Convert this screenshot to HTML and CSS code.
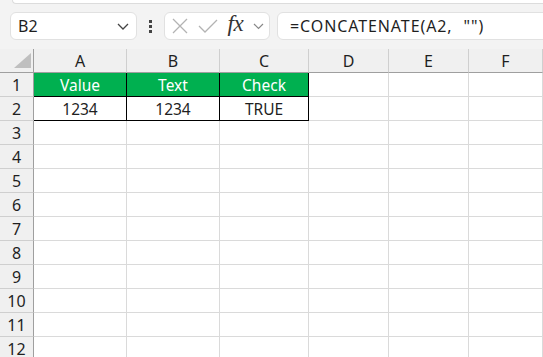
FILE: index.html
```html
<!DOCTYPE html>
<html lang="en">
<head>
    <meta charset="UTF-8">
    <meta name="viewport" content="width=device-width, initial-scale=1.0">
    <title>Sheet</title>
    <link rel="stylesheet" href="styles.css">
</head>
<body>
    <div class="toolbar">
        <div class="ribbon-edge"></div>
        <div class="formula-row">
            <div class="name-box">
                <span>B2</span>
                <svg width="12" height="7" viewBox="0 0 12 7"><path d="M1 1 L6 6 L11 1" fill="none" stroke="#444" stroke-width="1.3"/></svg>
            </div>
            <div class="dots"><i></i><i></i><i></i></div>
            <div class="func-box">
                <svg width="16" height="16" viewBox="0 0 16 16"><path d="M1 1 L15 15 M15 1 L1 15" stroke="#b3b3b3" stroke-width="1.3"/></svg>
                <svg width="20" height="14" viewBox="0 0 20 14"><path d="M1 7 L7 13 L19 1" fill="none" stroke="#b3b3b3" stroke-width="1.3"/></svg>
                <span class="fx">fx</span>
                <svg width="11" height="7" viewBox="0 0 11 7"><path d="M1 1 L5.5 5.5 L10 1" fill="none" stroke="#888" stroke-width="1.2"/></svg>
            </div>
            <div class="formula">=CONCATENATE(A2, "")</div>
        </div>
    </div>

    <div class="sheet">
        <div class="corner"><div class="tri"></div></div>
        <div class="col-head">A</div>
        <div class="col-head">B</div>
        <div class="col-head">C</div>
        <div class="col-head">D</div>
        <div class="col-head">E</div>
        <div class="col-head">F</div>

        <div class="row-head">1</div>
        <div class="cell head b">Value</div>
        <div class="cell head b">Text</div>
        <div class="cell head b">Check</div>
        <div class="cell"></div><div class="cell"></div><div class="cell"></div>

        <div class="row-head">2</div>
        <div class="cell b">1234</div>
        <div class="cell b">1234</div>
        <div class="cell b">TRUE</div>
        <div class="cell"></div><div class="cell"></div><div class="cell"></div>
    </div>

    <script>
        // filas vacias 3 a 12
        const sheet = document.querySelector('.sheet');
        for (let r = 3; r <= 12; r++) {
            let html = '<div class="row-head">' + r + '</div>';
            for (let c = 0; c < 6; c++) html += '<div class="cell"></div>';
            sheet.insertAdjacentHTML('beforeend', html);
        }
    </script>
</body>
</html>
```

FILE: styles.css
```css
body {
    margin: 0;
    font-family: "Noto Sans", "Liberation Sans", sans-serif;
    color: #1f1f1f;
    background-color: #fff;
    overflow: hidden;
}
.toolbar {
    background-color: #f3f3f3;
    height: 49px;
}
.ribbon-edge {
    height: 3px;
    margin-left: 12px;
    background-color: #fff;
    border-bottom: 1px solid #dcdcdc;
    border-left: 1px solid #dcdcdc;
    border-bottom-left-radius: 6px;
}
.formula-row {
    display: flex;
    align-items: center;
    margin-top: 7px;
    padding-left: 10px;
    height: 30px;
}
.name-box,
.func-box,
.formula {
    height: 28px;
    box-sizing: border-box;
    background-color: #fff;
    border: 1px solid #e1e1e1;
    border-radius: 6px;
    display: flex;
    align-items: center;
}
.name-box {
    width: 127px;
    padding: 0 7px 0 7px;
    justify-content: space-between;
    font-size: 16px;
}
.dots {
    width: 27px;
    display: flex;
    flex-direction: column;
    align-items: center;
    gap: 2px;
}
.dots i {
    width: 3px;
    height: 3px;
    background-color: #444;
}
.func-box {
    width: 106px;
    padding: 0 5px 0 7px;
    justify-content: space-between;
}
.fx {
    font-family: "Liberation Serif", serif;
    font-style: italic;
    font-size: 23px;
    color: #333;
    margin-top: -4px;
    letter-spacing: -0.5px;
}
.formula {
    flex: 1;
    margin-left: 7px;
    margin-right: -10px;
    padding-left: 12px;
    font-size: 16px;
    letter-spacing: 0.9px;
    word-spacing: 6px;
}
.sheet {
    display: grid;
    grid-template-columns: 34px 93px 93px 89px 80px 80px 1fr;
    grid-auto-rows: 24px;
}
.corner,
.col-head,
.row-head {
    background-color: #f0f0f0;
    box-sizing: border-box;
    font-size: 16px;
    display: flex;
    align-items: center;
    justify-content: center;
}
.corner {
    border-right: 1px solid #9f9f9f;
    border-bottom: 1px solid #9f9f9f;
    align-items: flex-end;
    justify-content: flex-end;
    padding: 0 2px 4px 0;
}
.tri {
    width: 17px;
    height: 15px;
    background-color: #bfbfbf;
    clip-path: polygon(100% 0, 100% 100%, 0 100%);
}
.col-head {
    border-right: 1px solid #cfcfcf;
    border-bottom: 1px solid #9f9f9f;
}
.row-head {
    border-right: 1px solid #9f9f9f;
    border-bottom: 1px solid #cfcfcf;
}
.cell {
    box-sizing: border-box;
    border-right: 1px solid #dadada;
    border-bottom: 1px solid #dadada;
    font-size: 15.5px;
    display: flex;
    align-items: center;
    justify-content: center;
}
.cell.b {
    border-right-color: #000;
    border-bottom-color: #000;
}
.cell.head {
    background-color: #00b050;
    color: #fff;
}
```
